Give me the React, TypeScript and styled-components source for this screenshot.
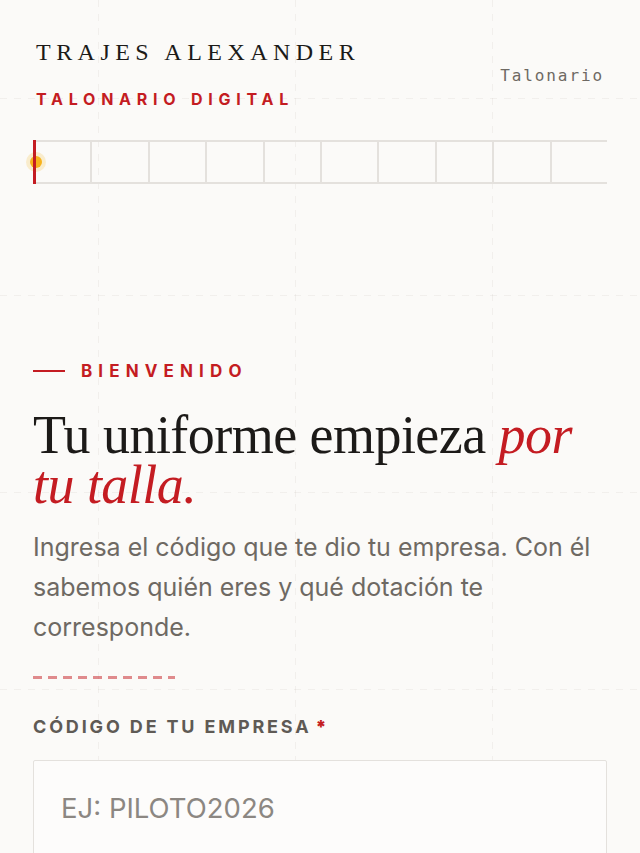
import * as React from 'react';
import styled, { createGlobalStyle } from 'styled-components';

const RED = '#c41c22';
const INK = '#1c1a18';
const MUTED = '#6e6963';
const LINE = '#e4e1dd';

const GlobalStyle = createGlobalStyle`
  html, body {
    margin: 0;
    padding: 0;
    background: #fbfaf8;
  }
  * {
    box-sizing: border-box;
  }
`;

const Page = styled.div`
  position: relative;
  min-height: 100vh;
  padding: 40px 33px 0 33px;
  overflow: hidden;
  font-family: Inter, 'Noto Sans', sans-serif;
  color: ${INK};

  &::before,
  &::after {
    content: '';
    position: absolute;
    inset: 0;
    pointer-events: none;
    z-index: 0;
  }

  /* dashed vertical grid lines */
  &::before {
    background-image: linear-gradient(
      to right,
      rgba(120, 100, 90, 0.07) 1px,
      transparent 1px
    );
    background-size: 197px 100%;
    background-position: 98px 0;
    -webkit-mask-image: repeating-linear-gradient(
      to bottom,
      #000 0 7px,
      transparent 7px 14px
    );
    mask-image: repeating-linear-gradient(
      to bottom,
      #000 0 7px,
      transparent 7px 14px
    );
  }

  /* dashed horizontal grid lines */
  &::after {
    background-image: linear-gradient(
      to bottom,
      rgba(120, 100, 90, 0.07) 1px,
      transparent 1px
    );
    background-size: 100% 197px;
    background-position: 0 98px;
    -webkit-mask-image: repeating-linear-gradient(
      to right,
      #000 0 7px,
      transparent 7px 14px
    );
    mask-image: repeating-linear-gradient(
      to right,
      #000 0 7px,
      transparent 7px 14px
    );
  }
`;

const Content = styled.div`
  position: relative;
  z-index: 1;
`;

const Header = styled.header`
  display: flex;
  align-items: center;
  justify-content: space-between;
`;

const Brand = styled.div`
  display: flex;
  flex-direction: column;
  gap: 26px;
`;

const BrandName = styled.h1`
  margin: 0;
  font-family: 'Liberation Serif', 'DejaVu Serif', serif;
  font-weight: 400;
  font-size: 24px;
  line-height: 24px;
  letter-spacing: 0.228em;
  color: ${INK};
  padding-left: 3px;
  white-space: nowrap;
`;

const BrandTag = styled.div`
  font-size: 16px;
  font-weight: 700;
  letter-spacing: 0.36em;
  line-height: 18px;
  color: ${RED};
  padding-left: 3px;
  white-space: nowrap;
`;

const HeaderMeta = styled.span`
  font-family: 'DejaVu Sans Mono', 'Liberation Mono', monospace;
  font-size: 16px;
  letter-spacing: 1.9px;
  color: ${MUTED};
  margin-top: 2px;
  margin-right: 3px;
`;

const Steps = styled.div`
  margin-top: 32px;
  display: grid;
  grid-template-columns: repeat(10, 1fr);
  height: 44px;
  border-top: 2px solid ${LINE};
  border-bottom: 2px solid ${LINE};
`;

const Step = styled.div<{ $active?: boolean }>`
  position: relative;
  border-left: 2px solid ${LINE};

  ${(p) =>
    p.$active &&
    `
    border-left: none;
    &::after {
      content: '';
      position: absolute;
      left: 0;
      top: -2px;
      bottom: -2px;
      width: 3px;
      background: ${RED};
    }
  `}
`;

const Marker = styled.span`
  position: absolute;
  left: -3px;
  top: 50%;
  width: 12px;
  height: 12px;
  transform: translateY(-50%);
  border-radius: 50%;
  background: #f7b21c;
  box-shadow: 0 0 0 4px rgba(247, 178, 28, 0.2);
`;

const Intro = styled.section`
  margin-top: 177px;
`;

const Eyebrow = styled.div`
  display: flex;
  align-items: center;
  gap: 16px;
  font-size: 17px;
  line-height: 20px;
  font-weight: 700;
  letter-spacing: 0.36em;
  color: ${RED};

  &::before {
    content: '';
    width: 32px;
    height: 2px;
    background: ${RED};
  }
`;

const Title = styled.h2`
  margin: 29px 0 0;
  font-family: 'Liberation Serif', 'DejaVu Serif', serif;
  font-weight: 400;
  font-size: 54px;
  line-height: 50px;
  letter-spacing: -0.01em;
  color: ${INK};

  em {
    color: ${RED};
    font-style: italic;
  }
`;

const Lead = styled.p`
  margin: 17px 0 0;
  font-size: 25px;
  line-height: 40px;
  color: ${MUTED};
`;

const Divider = styled.hr`
  margin: 29px 0 0;
  width: 142px;
  border: none;
  height: 3px;
  background: repeating-linear-gradient(
    to right,
    rgba(196, 28, 34, 0.5) 0 9px,
    transparent 9px 15px
  );
`;

const Field = styled.label`
  display: block;
  margin-top: 37px;
`;

const FieldLabel = styled.span`
  display: block;
  font-size: 18px;
  line-height: 22px;
  font-weight: 700;
  letter-spacing: 0.158em;
  color: #5f5a55;

  b {
    color: ${RED};
    margin-left: 4px;
  }
`;

const Input = styled.input`
  display: block;
  width: 100%;
  margin-top: 22px;
  height: 100px;
  padding: 0 27px 4px;
  border: 1.5px solid ${LINE};
  border-radius: 2px;
  background: #fdfcfb;
  font-family: Inter, 'Noto Sans', sans-serif;
  font-size: 27.5px;
  color: ${INK};
  outline: none;

  &::placeholder {
    color: #8c8782;
  }
`;

export default function App() {
  const steps = Array.from({ length: 10 }, (_, i) => i);

  return (
    <>
      <GlobalStyle />
      <Page>
        <Content>
          <Header>
            <Brand>
              <BrandName>TRAJES ALEXANDER</BrandName>
              <BrandTag>TALONARIO DIGITAL</BrandTag>
            </Brand>
            <HeaderMeta>Talonario</HeaderMeta>
          </Header>

          <Steps>
            {steps.map((i) => (
              <Step key={i} $active={i === 0}>
                {i === 0 && <Marker />}
              </Step>
            ))}
          </Steps>

          <Intro>
            <Eyebrow>BIENVENIDO</Eyebrow>
            <Title>
              Tu uniforme empieza <em>por tu talla.</em>
            </Title>
            <Lead>
              Ingresa el código que te dio tu empresa. Con él sabemos quién
              eres y qué dotación te corresponde.
            </Lead>
            <Divider />

            <Field>
              <FieldLabel>
                CÓDIGO DE TU EMPRESA<b>*</b>
              </FieldLabel>
              <Input placeholder="EJ: PILOTO2026" />
            </Field>
          </Intro>
        </Content>
      </Page>
    </>
  );
}
